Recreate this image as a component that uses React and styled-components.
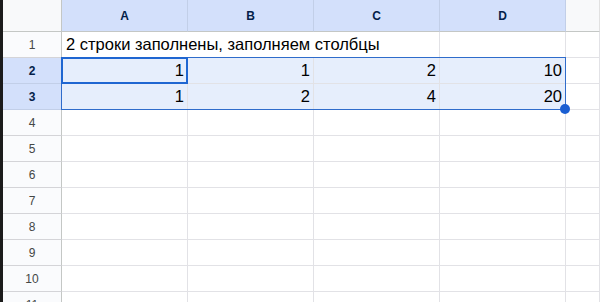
import React from 'react'
import styled, { createGlobalStyle } from 'styled-components';

const GlobalStyle = createGlobalStyle`
  html, body {
    margin: 0;
    padding: 0;
    background: #fff;
    overflow: hidden;
  }
  body {
    font-family: "Liberation Sans", Arial, sans-serif;
  }
`;

const Frame = styled.div`
  width: 600px;
  height: 302px;
  overflow: hidden;
  border-left: 3px solid #1b1b1b;
  box-sizing: border-box;
  background: #fff;
`;

const Sheet = styled.div`
  position: relative;
  display: grid;
  grid-template-columns: 59px repeat(4, 126px) 1fr;
  grid-template-rows: 32px repeat(11, 26px);
`;

const Corner = styled.div`
  background: #f8f9fa;
  border-right: 1px solid #c4c7c5;
  border-bottom: 1px solid #c4c7c5;
`;

const ColHeader = styled.div`
  display: flex;
  align-items: center;
  justify-content: center;
  font-size: 12px;
  font-weight: ${p => (p.$selected ? 700 : 400)};
  color: ${p => (p.$selected ? '#041e49' : '#444746')};
  background: ${p => (p.$selected ? '#d3e0fb' : '#f8f9fa')};
  border-right: 1px solid ${p => (p.$selected ? '#c2cfe8' : '#e1e1e1')};
  border-bottom: 1px solid #c4c7c5;
`;

const RowHeader = styled.div`
  display: flex;
  align-items: center;
  justify-content: center;
  font-size: 12px;
  font-weight: ${p => (p.$selected ? 700 : 400)};
  color: ${p => (p.$selected ? '#041e49' : '#444746')};
  background: ${p => (p.$selected ? '#d3e0fb' : '#fafbfd')};
  border-right: 1px solid #c4c7c5;
  border-bottom: 1px solid ${p => (p.$selected ? '#c2cfe8' : '#d4d4d8')};
`;

const Cell = styled.div`
  display: flex;
  align-items: center;
  justify-content: ${p => (p.$num ? 'flex-end' : 'flex-start')};
  padding: 0 3px 0 4px;
  font-size: 16.5px;
  color: #000;
  white-space: nowrap;
  overflow: visible;
  background: ${p => (p.$selected ? '#e6eefc' : '#fff')};
  border-right: 1px solid #e2e2e6;
  border-bottom: 1px solid #e2e2e6;
  grid-column: ${p => (p.$span ? `span ${p.$span}` : 'auto')};
`;

const Selection = styled.div`
  position: absolute;
  left: 58px;
  top: 57px;
  width: 505px;
  height: 53px;
  box-sizing: border-box;
  border: 1px solid #2f6ccb;
  pointer-events: none;
`;

const ActiveCell = styled.div`
  position: absolute;
  left: 58px;
  top: 57px;
  width: 127px;
  height: 27px;
  box-sizing: border-box;
  border: 2px solid #1f66d1;
  pointer-events: none;
`;

const FillHandle = styled.div`
  position: absolute;
  left: 557px;
  top: 104px;
  width: 10px;
  height: 10px;
  border-radius: 50%;
  background: #1a5ed2;
`;

const columns = ['A', 'B', 'C', 'D', ''];
const data = {
  2: [1, 1, 2, 10],
  3: [1, 2, 4, 20],
};

export default function App() {
  const rows = [];
  for (let r = 1; r <= 11; r++) {
    const sel = r === 2 || r === 3;
    rows.push(<RowHeader key={`h${r}`} $selected={sel}>{r}</RowHeader>);
    if (r === 1) {
      rows.push(<Cell key="t1" $span={3}>2 строки заполнены, заполняем столбцы</Cell>);
      rows.push(<Cell key="d1" />);
      rows.push(<Cell key="e1" />);
    } else if (data[r]) {
      data[r].forEach((v, i) => rows.push(<Cell key={`${r}-${i}`} $num $selected>{v}</Cell>));
      rows.push(<Cell key={`${r}-e`} />);
    } else {
      columns.forEach((c, i) => rows.push(<Cell key={`${r}-${i}`} />));
    }
  }

  return (
    <>
      <GlobalStyle />
      <Frame>
        <Sheet>
          <Corner />
          {columns.map((c, i) => (
            <ColHeader key={i} $selected={c !== ''}>{c}</ColHeader>
          ))}
          {rows}
          <Selection />
          <ActiveCell />
          <FillHandle />
        </Sheet>
      </Frame>
    </>
  )
}
